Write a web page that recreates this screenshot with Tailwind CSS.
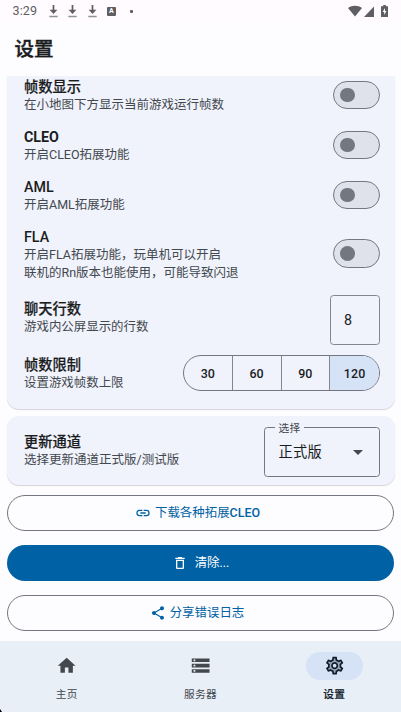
<!DOCTYPE html>
<html lang="zh-CN">
<head>
<meta charset="utf-8">
<title>设置</title>
<script src="https://cdn.jsdelivr.net/npm/@tailwindcss/browser@4"></script>
</head>
<body class="w-[401px] h-[712px] overflow-hidden flex flex-col bg-[#fdfcff] text-[#1a1c1e] font-['Roboto','Noto_Sans_CJK_SC',sans-serif] relative">
  <!-- Status bar -->
  <div class="h-[22px] shrink-0 flex items-center pl-[12.5px] pr-[13px] bg-[#fffbfe] text-[#5f5e62]">
    <span class="text-[12.5px] leading-[22px] w-[36px] tracking-[0.1px]">3:29</span>
    <svg class="w-[9px] h-[13px] shrink-0" viewBox="0 0 9 13" fill="none"><path d="M4.5 0v6" stroke="#5f5e62" stroke-width="1.7"/><path d="M.6 4.800h7.800L4.500 9z" fill="#5f5e62"/><path d="M.3 11.500h8.400" stroke="#929195" stroke-width="1.500"/></svg>
    <svg class="w-[9px] h-[13px] ml-[10.500px] shrink-0" viewBox="0 0 9 13" fill="none"><path d="M4.5 0v6" stroke="#5f5e62" stroke-width="1.7"/><path d="M.6 4.800h7.800L4.500 9z" fill="#5f5e62"/><path d="M.3 11.500h8.400" stroke="#929195" stroke-width="1.500"/></svg>
    <svg class="w-[9px] h-[13px] ml-[10.500px] shrink-0" viewBox="0 0 9 13" fill="none"><path d="M4.5 0v6" stroke="#5f5e62" stroke-width="1.7"/><path d="M.6 4.800h7.800L4.500 9z" fill="#5f5e62"/><path d="M.3 11.500h8.400" stroke="#929195" stroke-width="1.500"/></svg>
    <span class="ml-[10.5px] w-[8.500px] h-[9px] bg-[#5f5e62] text-white text-[7px] font-bold leading-[9px] text-center rounded-[1px]">A</span>
    <span class="ml-[14px] size-[3px] bg-[#5f5e62] rounded-[1px]"></span>
    <span class="grow"></span>
    <svg class="w-[14px] h-[12px]" viewBox="0 0 14 12"><path d="M0 3C4 0 10 0 14 3L7 11.500z" fill="#5f5e62"/></svg>
    <svg class="w-[10px] h-[11px] ml-[2px]" viewBox="0 0 10 11"><path d="M10 .5V11H0z" fill="#5f5e62"/></svg>
    <svg class="w-[7px] h-[12px] ml-[7px] mb-[1px]" viewBox="0 0 7 12"><path d="M2.200 0h2.600v1.200H7V12H0V1.200h2.200z" fill="#5f5e62"/><path d="M4 3L1.700 7h1.500v3L5.400 6H4z" fill="#fff"/></svg>
  </div>

  <header class="h-[54px] shrink-0 pl-[14.5px] pt-[2px] flex items-center">
    <h1 class="text-[19.5px] leading-[24px] font-medium [-webkit-text-stroke:0.4px]">设置</h1>
  </header>

  <main class="h-[565px] shrink-0 pl-[6.5px] pr-[6px] flex flex-col">
    <section class="h-[332.5px] shrink-0 bg-[#f0f3fb] rounded-b-[12px] px-[17.5px] pr-[15px] shadow-[0_1px_1px_rgba(0,0,0,0.16)]">
      <div class="h-[44px] pb-[6px] flex items-center justify-between">
        <div class="pt-[2px]"><div class="text-[14.25px] leading-[18px] font-medium [-webkit-text-stroke:0.2px]">帧数显示</div><div class="text-[12.5px] leading-[18px] text-[#43474e]">在小地图下方显示当前游戏运行帧数</div></div>
        <div class="w-[47px] h-[28.5px] rounded-full border-[1.5px] border-[#73777f] bg-[#dfe2eb] flex items-center pl-[6px]"><div class="size-[14.500px] rounded-full bg-[#73777f]"></div></div>
      </div>
      <div class="h-[50px] flex items-center justify-between">
        <div class="pt-[2px]"><div class="text-[14.25px] leading-[18px] font-bold">CLEO</div><div class="text-[12.5px] leading-[18px] text-[#43474e]">开启CLEO拓展功能</div></div>
        <div class="w-[47px] h-[28.5px] rounded-full border-[1.5px] border-[#73777f] bg-[#dfe2eb] flex items-center pl-[6px]"><div class="size-[14.500px] rounded-full bg-[#73777f]"></div></div>
      </div>
      <div class="h-[50px] flex items-center justify-between">
        <div class="pt-[2px]"><div class="text-[14.25px] leading-[18px] font-medium">AML</div><div class="text-[12.5px] leading-[18px] text-[#43474e]">开启AML拓展功能</div></div>
        <div class="w-[47px] h-[28.5px] rounded-full border-[1.5px] border-[#73777f] bg-[#dfe2eb] flex items-center pl-[6px]"><div class="size-[14.500px] rounded-full bg-[#73777f]"></div></div>
      </div>
      <div class="h-[67px] flex items-center justify-between">
        <div class="pt-[2px]"><div class="text-[14.25px] leading-[18px] font-medium">FLA</div><div class="text-[12.5px] leading-[18px] text-[#43474e]">开启FLA拓展功能，玩单机可以开启<br>联机的Rn版本也能使用，可能导致闪退</div></div>
        <div class="w-[47px] h-[28.5px] rounded-full border-[1.5px] border-[#73777f] bg-[#dfe2eb] flex items-center pl-[6px]"><div class="size-[14.500px] rounded-full bg-[#73777f]"></div></div>
      </div>
      <div class="h-[66px] flex items-center justify-between">
        <div class="pb-[4px]"><div class="text-[14.25px] leading-[18px] font-medium [-webkit-text-stroke:0.2px]">聊天行数</div><div class="text-[12.45px] leading-[18px] text-[#43474e]">游戏内公屏显示的行数</div></div>
        <div class="w-[50px] h-[50px] rounded-[3.5px] border border-[#83868f] flex items-center pl-[13px] pt-[2px] text-[14.250px]">8</div>
      </div>
      <div class="h-[40px] flex items-center justify-between">
        <div class="pt-[2px]"><div class="text-[14.25px] leading-[18px] font-medium [-webkit-text-stroke:0.2px]">帧数限制</div><div class="text-[12.45px] leading-[18px] text-[#43474e]">设置游戏帧数上限</div></div>
        <div class="w-[197px] h-[36px] rounded-full border border-[#73777f] grid grid-cols-4 overflow-hidden text-[12.450px] font-medium tracking-[0.1px] text-center leading-[35px] divide-x divide-[#83868f]">
          <div>30</div><div>60</div><div>90</div><div class="bg-[#d6e3f7]">120</div>
        </div>
      </div>
    </section>

    <section class="mt-[7px] h-[69px] shrink-0 bg-[#f0f3fb] rounded-[12px] pl-[17.5px] pr-[15px] flex items-center justify-between shadow-[0_1px_1px_rgba(0,0,0,0.16)]">
      <div class="pt-[2px]"><div class="text-[14.25px] leading-[18px] font-medium [-webkit-text-stroke:0.2px]">更新通道</div><div class="text-[12.5px] leading-[18px] text-[#43474e]">选择更新通道正式版/测试版</div></div>
      <div class="relative mt-[4px] w-[116px] h-[50px] rounded-[3.5px] border border-[#73777f] flex items-center justify-between pl-[13.5px] pr-[16.5px]">
        <span class="absolute left-[9.5px] top-[-7px] px-[4px] h-[16px] leading-[16px] bg-[#f0f3fb] text-[10.7px] text-[#43474e] tracking-[0.3px]">选择</span>
        <span class="pt-[2px] text-[14.25px] tracking-[0.3px]">正式版</span>
        <svg class="w-[10px] h-[5px]" viewBox="0 0 10 5"><path d="M0 0h10L5 5z" fill="#43474e"/></svg>
      </div>
    </section>

    <button class="mt-[10px] w-[387px] h-[36px] ml-[0.5px] pr-[6px] shrink-0 rounded-full border border-[#73777f] flex items-center justify-center gap-[4px] text-[#0061a4] text-[12.45px] font-medium">
      <svg class="size-[16px]" viewBox="0 0 24 24" fill="currentColor"><path d="M3.900 12c0-1.710 1.390-3.100 3.100-3.100h4V7H7a5 5 0 0 0 0 10h4v-1.900H7A3.100 3.100 0 0 1 3.900 12zM8 13h8v-2H8v2zm9-6h-4v1.900h4a3.100 3.100 0 0 1 0 6.200h-4V17h4a5 5 0 0 0 0-10z"/></svg>
      <span class="leading-[18px] pt-[1px]"><span class="font-normal">下载各种拓展</span>CLEO</span>
    </button>
    <button class="mt-[14px] w-[387px] h-[36px] ml-[0.5px] shrink-0 rounded-full bg-[#0061a4] flex items-center justify-center gap-[7px] text-white text-[12.45px]">
      <svg class="size-[16px]" viewBox="0 0 24 24" fill="currentColor"><path d="M6 19c0 1.100.9 2 2 2h8c1.100 0 2-.9 2-2V7H6v12zM8 9h8v10H8V9zm7.500-5l-1-1h-5l-1 1H5v2h14V4h-3.500z"/></svg>
      <span class="leading-[18px]">清除...</span>
    </button>
    <button class="mt-[14px] w-[387px] h-[36px] ml-[0.5px] pr-[7px] shrink-0 rounded-full border border-[#73777f] flex items-center justify-center gap-[4px] text-[#0061a4] text-[12.45px]">
      <svg class="size-[16px]" viewBox="0 0 24 24" fill="currentColor"><path d="M18 16.080c-.76 0-1.440.3-1.960.77L8.910 12.700c.05-.23.09-.46.09-.7s-.04-.47-.09-.7l7.050-4.110c.54.5 1.250.81 2.040.81 1.660 0 3-1.340 3-3s-1.340-3-3-3-3 1.340-3 3c0 .24.04.47.09.7L8.040 9.810C7.500 9.310 6.790 9 6 9c-1.660 0-3 1.340-3 3s1.340 3 3 3c.79 0 1.500-.31 2.040-.81l7.120 4.160c-.05.21-.08.43-.08.65 0 1.610 1.310 2.920 2.920 2.920s2.920-1.310 2.920-2.920-1.310-2.920-2.920-2.920z"/></svg>
      <span class="leading-[18px]">分享错误日志</span>
    </button>
  </main>

  <nav class="h-[71px] shrink-0 bg-[#e8eff7] grid grid-cols-3 pt-[10.5px] text-[10.7px] tracking-[0.3px] text-[#43474e]">
    <div class="flex flex-col items-center">
      <div class="w-[57px] h-[28.500px] flex items-center justify-center"><svg class="size-[21.300px]" viewBox="0 0 24 24" fill="currentColor"><path d="M10 20v-6h4v6h5v-8h3L12 3 2 12h3v8z"/></svg></div>
      <span class="mt-[7px] leading-[16px]">主页</span>
    </div>
    <div class="flex flex-col items-center">
      <div class="w-[57px] h-[28.500px] flex items-center justify-center"><svg class="size-[21.300px]" viewBox="0 0 24 24" fill="currentColor"><path d="M2 20h20v-4H2v4zm2-3h2v2H4v-2zM2 4v4h20V4H2zm4 3H4V5h2v2zm-4 7h20v-4H2v4zm2-3h2v2H4v-2z"/></svg></div>
      <span class="mt-[7px] leading-[16px]">服务器</span>
    </div>
    <div class="flex flex-col items-center text-[#101c2b] font-medium">
      <div class="w-[57px] h-[28.500px] rounded-full bg-[#d6e3f7] flex items-center justify-center"><svg class="size-[21.300px]" viewBox="0 0 24 24" fill="currentColor"><path opacity=".3" d="M19.280 8.600l-.7-1.210-1.270.51-1.060.43-.91-.7c-.39-.3-.8-.54-1.230-.71l-1.060-.43-.16-1.130L12.700 4h-1.400l-.19 1.350-.16 1.130-1.060.44c-.41.17-.82.41-1.250.73l-.9.680-1.050-.420-1.270-.52-.7 1.210 1.080.84.89.7-.14 1.130c-.03.3-.05.53-.05.730s.02.43.05.73l.14 1.130-.89.7-1.080.84.7 1.210 1.270-.51 1.060-.43.91.7c.39.3.8.54 1.230.71l1.060.43.16 1.130.19 1.360h1.390l.19-1.350.16-1.130 1.060-.43c.41-.17.82-.41 1.250-.73l.9-.68 1.040.42 1.270.51.7-1.210-1.080-.84-.89-.7.14-1.130c.04-.31.05-.52.05-.73 0-.21-.02-.43-.05-.73l-.14-1.130.89-.7 1.100-.84zM12 16c-2.210 0-4-1.790-4-4s1.790-4 4-4 4 1.790 4 4-1.790 4-4 4z"/><path d="M19.430 12.980c.04-.32.07-.64.07-.98 0-.34-.03-.66-.07-.98l2.110-1.650c.19-.15.24-.42.12-.64l-2-3.460c-.09-.16-.26-.25-.44-.25-.06 0-.12.010-.17.030l-2.490 1c-.52-.4-1.080-.73-1.690-.98l-.38-2.650C14.460 2.180 14.250 2 14 2h-4c-.25 0-.46.18-.49.42l-.38 2.650c-.61.25-1.170.59-1.690.98l-2.490-1c-.06-.02-.12-.03-.18-.03-.17 0-.34.09-.43.25l-2 3.460c-.13.22-.07.49.12.64l2.110 1.650c-.04.32-.07.65-.07.980s.03.66.07.980l-2.110 1.650c-.19.15-.24.42-.12.640l2 3.460c.09.16.26.25.44.25.06 0 .12-.01.17-.03l2.490-1c.52.4 1.080.73 1.690.98l.38 2.650c.03.24.24.42.49.42h4c.25 0 .46-.18.49-.42l.38-2.650c.61-.25 1.170-.59 1.690-.98l2.490 1c.06.020.12.030.18.030.17 0 .34-.09.43-.25l2-3.460c.12-.22.070-.49-.12-.64l-2.110-1.650zm-1.980-1.710c.04.31.05.52.05.73 0 .21-.02.43-.05.73l-.14 1.130.89.7 1.080.84-.7 1.210-1.270-.51-1.040-.42-.9.680c-.43.32-.84.56-1.250.73l-1.060.43-.16 1.130-.2 1.350h-1.400l-.19-1.350-.16-1.130-1.060-.43c-.43-.18-.83-.41-1.230-.71l-.91-.7-1.060.43-1.270.51-.7-1.210 1.080-.84.89-.7-.14-1.130c-.03-.31-.05-.54-.05-.74s.02-.43.05-.73l.14-1.130-.89-.7-1.080-.84.7-1.210 1.270.51 1.040.42.9-.68c.43-.32.84-.56 1.250-.73l1.060-.43.16-1.130.2-1.350h1.390l.19 1.350.16 1.130 1.060.43c.43.18.83.41 1.230.71l.91.7 1.060-.43 1.270-.51.7 1.210-1.070.85-.89.7.14 1.130zM12 8c-2.210 0-4 1.790-4 4s1.790 4 4 4 4-1.790 4-4-1.790-4-4-4zm0 6c-1.100 0-2-.9-2-2s.9-2 2-2 2 .9 2 2-.9 2-2 2z"/></svg></div>
      <span class="mt-[7px] leading-[16px] [-webkit-text-stroke:0.2px]">设置</span>
    </div>
  </nav>
  <svg class="absolute left-0 bottom-0 w-[2px] h-[3px]" viewBox="0 0 2 3"><path d="M0 0L2 3H0z" fill="#000"/></svg>
</body>
</html>
